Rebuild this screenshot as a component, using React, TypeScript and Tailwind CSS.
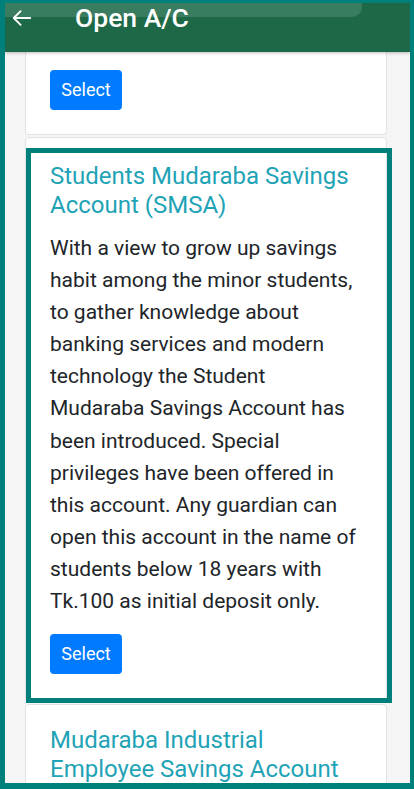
import React from "react";

function SelectBtn() {
  return (
    <button className="w-[72px] h-[40px] rounded-[4px] bg-[#007bff] text-white text-[18px] leading-none flex items-center justify-center">
      Select
    </button>
  );
}

export default function App() {
  const font = { fontFamily: "Roboto, 'Noto Sans', sans-serif" };
  return (
    <div
      className="w-[414px] h-[789px] bg-[#00807b] pt-[3px] pl-[5px] pr-[4px] pb-[6px] overflow-hidden"
      style={font}
    >
      <div className="w-full h-full bg-[#f5f5f5] flex flex-col overflow-hidden">
        <div className="relative h-[49px] shrink-0 bg-[#1d6846] shadow-[0_1px_3px_rgba(0,0,0,0.25)] z-10">
          <div className="absolute top-0 left-0 w-[357px] h-[14px] bg-[#3a7c60] rounded-br-[10px]" />
          <div className="relative flex items-center h-[30px] pl-[6px]">
            <svg width="22" height="22" viewBox="0 0 24 24" fill="none" stroke="white" strokeWidth="2" strokeLinecap="round" strokeLinejoin="round">
              <path d="M21 12H3.5" />
              <path d="M10.5 4.5L3 12l7.5 7.5" />
            </svg>
            <span className="ml-[42px] text-white text-[26.5px] font-medium leading-none">Open A/C</span>
          </div>
        </div>
        <div className="flex flex-col gap-[2px] pl-[20px] pr-[23px]">
          <div className="bg-white border-x border-b border-[#e2e2e2] rounded-b-[4px] pt-[18px] pb-[24px] px-[24px]">
            <SelectBtn />
          </div>
          <div className="relative bg-white border border-[#e2e2e2] rounded-[4px] pt-[24px] pb-[27px] px-[24px]">
            <div className="absolute top-[10px] left-[0px] right-[-6px] bottom-[-2px] border-[5px] border-[#00807b]" />
            <h3 className="text-[24px] leading-[28.5px] text-[#1fa3b6]">
              Students Mudaraba Savings Account (SMSA)
            </h3>
            <p className="mt-[13px] text-[21px] leading-[32.1px] text-[#212529]">
              With a view to grow up savings habit among the minor students, to gather knowledge about banking services and modern technology the Student Mudaraba Savings Account has been introduced. Special privileges have been offered in this account. Any guardian can open this account in the name of students below 18 years with Tk.100 as initial deposit only.
            </p>
            <div className="mt-[17px]">
              <SelectBtn />
            </div>
          </div>
          <div className="bg-white border border-[#e2e2e2] rounded-[4px] pt-[21px] pb-[24px] px-[24px]">
            <h3 className="text-[24px] leading-[28.5px] text-[#1fa3b6]">
              Mudaraba Industrial Employee Savings Account
            </h3>
          </div>
        </div>
      </div>
    </div>
  );
}
